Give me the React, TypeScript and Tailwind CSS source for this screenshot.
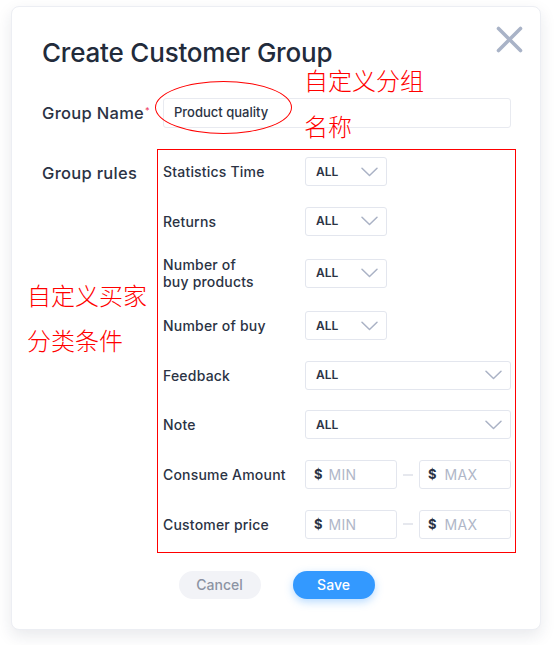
const font = { fontFamily: 'Inter, "Noto Sans", sans-serif' };
const cjk = { fontFamily: '"Noto Sans CJK SC", sans-serif' };

function Chevron() {
  return (
    <svg width="17" height="10" viewBox="0 0 17 10" fill="none">
      <path d="M1 1.2 8.5 8.5 16 1.2" stroke="#aab2c5" strokeWidth="1.5" strokeLinecap="round" strokeLinejoin="round" />
    </svg>
  );
}

function Select({ wide }: { wide?: boolean }) {
  return (
    <div
      className={[
        'flex h-[29px] items-center justify-between rounded-[3px] border border-[#e3e6ee] bg-white pl-[10px] pr-[8px]',
        wide ? 'w-[206px]' : 'w-[82px]',
      ].join(' ')}
    >
      <span className="text-[12px] font-semibold text-[#2b3344]">ALL</span>
      <Chevron />
    </div>
  );
}

function Range() {
  return (
    <div className="flex items-center">
      <div className="flex h-[29px] w-[92px] items-center gap-[6px] rounded-[3px] border border-[#e3e6ee] pl-[8px]">
        <span className="text-[13px] font-bold text-[#2b3344]">$</span>
        <span className="text-[14px] tracking-[0.3px] text-[#b0b7c8]">MIN</span>
      </div>
      <div className="mx-[6px] h-[2px] w-[10px] bg-[#e6e8ee]" />
      <div className="flex h-[29px] w-[92px] items-center gap-[8px] rounded-[3px] border border-[#e3e6ee] pl-[8px]">
        <span className="text-[13px] font-bold text-[#2b3344]">$</span>
        <span className="text-[14px] tracking-[0.3px] text-[#b0b7c8]">MAX</span>
      </div>
    </div>
  );
}

const rules: { label: string; control: 'select' | 'wide' | 'range' }[] = [
  { label: 'Statistics Time', control: 'select' },
  { label: 'Returns', control: 'select' },
  { label: 'Number of\nbuy products', control: 'select' },
  { label: 'Number of buy', control: 'select' },
  { label: 'Feedback', control: 'wide' },
  { label: 'Note', control: 'wide' },
  { label: 'Consume Amount', control: 'range' },
  { label: 'Customer price', control: 'range' },
];

export default function App() {
  return (
    <div className="relative h-[645px] w-[554px] bg-white" style={font}>
      <div className="absolute left-[11px] top-[6px] flex h-[624px] w-[530px] flex-col rounded-[8px] border border-[#eceef3] bg-white pl-[30px] pr-[29px] pt-[30px] shadow-[0_6px_16px_rgba(30,40,70,0.10)]">
        <button className="absolute right-[17px] top-[19px]">
          <svg width="27" height="27" viewBox="0 0 27 27" fill="none">
            <path d="M2.5 2.5 24.5 24.5M24.5 2.5 2.5 24.5" stroke="#a9b3c7" strokeWidth="3.6" strokeLinecap="round" />
          </svg>
        </button>

        <h1 className="text-[26px] font-medium leading-[32px] tracking-[-0.2px] text-[#222b3b]">Create Customer Group</h1>

        <div className="mt-[29px] flex items-center">
          <div className="w-[121px] shrink-0 text-[16.5px] font-medium tracking-[0.3px] text-[#2b3344]">
            Group Name<span className="relative -top-[5px] ml-[1px] text-[9px] text-[#ef4a6a]">*</span>
          </div>
          <div className="flex h-[30px] flex-1 items-center rounded-[3px] border border-[#e8eaf0] pl-[10px] text-[13px] font-medium text-[#2b3344]">
            Product quality
          </div>
        </div>

        <div className="mt-[21px] flex items-start">
          <div className="w-[115px] shrink-0 pt-[12px] text-[16.5px] font-medium tracking-[0.3px] text-[#2b3344]">
            Group rules
          </div>
          <div className="-mr-[5px] flex flex-1 flex-col gap-[20.7px] border border-[#ff0000] pb-[13px] pl-[5px] pr-[4px] pt-[7px]">
            {rules.map((r) => (
              <div key={r.label} className="flex items-center">
                <div className="w-[142px] shrink-0 whitespace-pre-line text-[14px] font-medium leading-[17px] tracking-[0.2px] text-[#2b3344]">
                  {r.label}
                </div>
                {r.control === 'range' ? <Range /> : <Select wide={r.control === 'wide'} />}
              </div>
            ))}
          </div>
        </div>

        <div className="mt-[18px] flex justify-center gap-[32px]">
          <button className="h-[28px] w-[82px] rounded-full bg-[#f2f3f7] text-[14px] font-medium text-[#8c93a3]">
            Cancel
          </button>
          <button className="h-[28px] w-[82px] rounded-full bg-[#3399ff] text-[14px] font-medium text-white shadow-[0_3px_8px_rgba(51,153,255,0.35)]">
            Save
          </button>
        </div>
      </div>

      {/* annotations drawn over the dialog */}
      <div className="pointer-events-none absolute left-[155px] top-[81px] h-[53px] w-[137px] rounded-[50%] border-[1.5px] border-[#ff0000]" />
      <div className="pointer-events-none absolute left-[304px] top-[57px] text-[24px] font-light leading-[46px] text-[#ff0000]" style={cjk}>
        自定义分组
        <br />
        名称
      </div>
      <div className="pointer-events-none absolute left-[27px] top-[272px] text-[24px] font-light leading-[45px] text-[#ff0000]" style={cjk}>
        自定义买家
        <br />
        分类条件
      </div>
    </div>
  );
}
